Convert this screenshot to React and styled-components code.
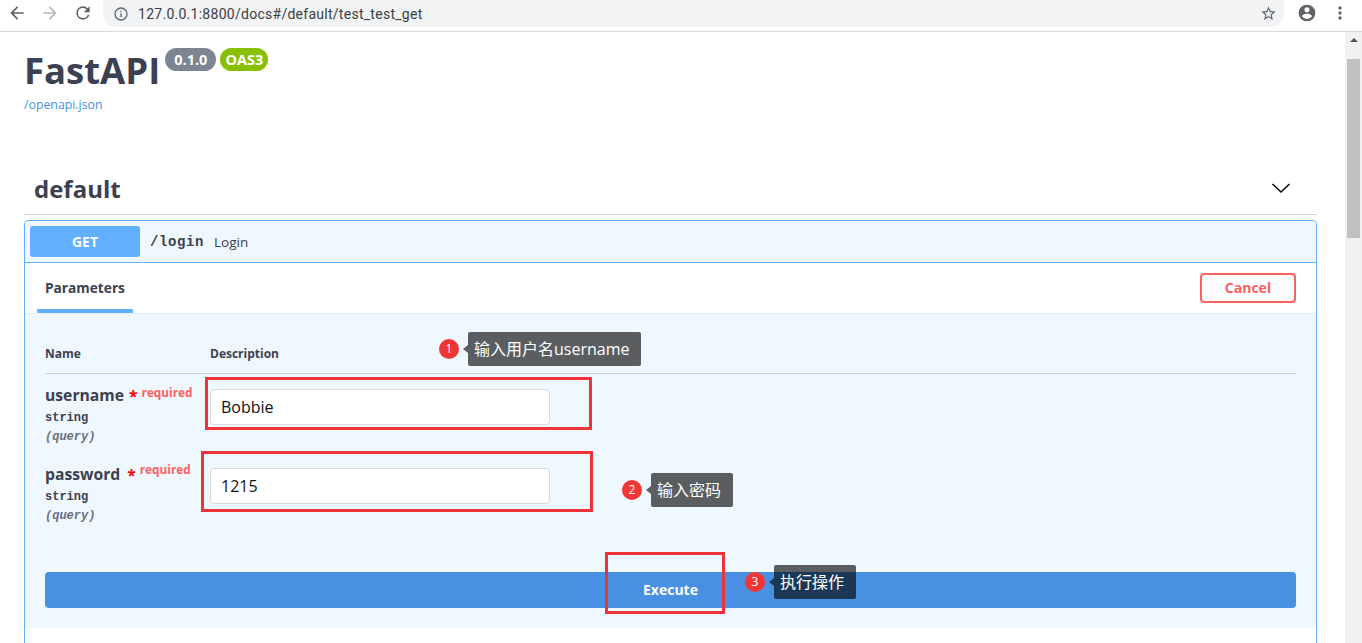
import React from 'react';
import styled, { createGlobalStyle } from 'styled-components';

const Global = createGlobalStyle`
  html, body { margin: 0; padding: 0; height: 643px; overflow: hidden; background: #fff; }
  * { box-sizing: border-box; }
  body { font-family: "Open Sans", "Noto Sans CJK SC", sans-serif; color: #3b4151; }
`;

const Shell = styled.div`display: flex; flex-direction: column; width: 1362px; height: 643px; overflow: hidden;`;

const Toolbar = styled.header`
  flex: none; height: 32px; display: flex; align-items: flex-start; background: #fff;
  border-bottom: 1px solid #d9dadc; padding-left: 7px;
`;
const NavIcon = styled.svg`flex: none; width: 20px; height: 20px; margin-top: 3px; margin-right: ${p => p.$mr || 13}px; fill: ${p => p.$c || '#5f6368'};`;
const Omnibox = styled.div`
  flex: none; width: 1181px; height: 27px; margin-left: 9px; margin-right: 13px; border-radius: 0 0 14px 14px / 0 0 13px 13px;
  background: #f1f3f4; display: flex; align-items: center; padding: 0 7px 0 10px;
`;
const UrlText = styled.span`
  flex: 1; font-family: Roboto, "Liberation Sans", sans-serif; font-size: 14px; color: #3c4043; margin-left: 9px; letter-spacing: .27px;
`;
const SmallIcon = styled.svg`flex: none; width: ${p => p.$s || 16}px; height: ${p => p.$s || 16}px; fill: #5f6368;`;

const Body = styled.div`flex: 1; display: flex; min-height: 0;`;
const Page = styled.main`flex: 1; position: relative; padding: 0 28px 0 24px; overflow: hidden;`;

const Scrollbar = styled.aside`flex: none; width: 17px; background: #f1f1f1; display: flex; flex-direction: column; align-items: center; padding-top: 6px;`;
const ScrollArrow = styled.div`width: 0; height: 0; border-left: 4px solid transparent; border-right: 4px solid transparent; border-bottom: 4px solid #505050;`;
const ScrollThumb = styled.div`width: 13px; height: 179px; margin-top: 17px; background: #c1c1c1;`;

const Info = styled.section`height: 138px; padding-top: 18px;`;
const TitleRow = styled.div`display: flex; align-items: flex-start; height: 43px;`;
const Title = styled.h1`margin: 0; font-size: 36.5px; line-height: 41px; font-weight: 700; color: #3b4151;`;
const Badge = styled.span`
  height: 23px; margin: -2px 0 0 ${p => p.$ml}px; padding: 0 ${p => p.$px}px; border-radius: 12px; background: ${p => p.$bg};
  color: #fff; font-size: 14.5px; line-height: 23px; font-weight: 700;
`;
const SpecLink = styled.a`display: block; margin-top: 4px; font-size: 12.3px; line-height: 16px; color: #4990e2;`;

const TagHead = styled.div`
  height: 45px; padding: 0 26px 6px 10px; display: flex; align-items: center; justify-content: space-between;
  border-bottom: 1px solid #d0d2d6;
`;
const TagName = styled.h3`margin: 0; font-size: 24px; font-weight: 700; color: #3b4151; line-height: 34px;`;
const Chevron = styled.svg`width: 20px; height: 20px; margin-top: -2px; fill: none; stroke: #000; stroke-width: 1.5;`;

const Opblock = styled.article`margin-top: 5px; border: 1px solid #61affe; border-radius: 4px; background: #fff; height: 440px; overflow: hidden;`;
const Summary = styled.div`height: 42px; display: flex; align-items: center; padding-left: 5px; border-bottom: 1px solid #61affe; background: #eff7ff;`;
const Method = styled.span`
  width: 110px; height: 31px; border-radius: 3px; background: #61affe; color: #fff; font-size: 14px; font-weight: 700;
  display: flex; align-items: center; justify-content: center;
`;
const PathText = styled.span`margin-left: 10px; font-family: "Liberation Mono", monospace; font-size: 14px; font-weight: 700; color: #3b4151; letter-spacing: .6px;`;
const SummaryText = styled.span`margin-left: 10px; font-size: 13.5px; color: #3b4151;`;

const TabBar = styled.div`
  height: 51px; background: #fff; padding: 0 20px 0 12px; display: flex; justify-content: space-between; align-items: flex-start;
  border-bottom: 1px solid #e5eef7;
`;
const Tab = styled.div`
  width: 96px; height: 50px; padding: 15px 0 0 8px; font-size: 13.7px; line-height: 19px; font-weight: 700; color: #3b4151;
  border-bottom: 4px solid #61affe;
`;
const CancelButton = styled.button`
  width: 96px; height: 30px; margin-top: 10px; background: #fff; border: 2px solid #ff6060; border-radius: 4px;
  color: #ff6060; font: 700 14px "Open Sans", sans-serif; padding: 0 0 2px;
`;

const Params = styled.div`padding: 28px 20px 0; background: #eff7ff;`;
const ColHead = styled.div`
  display: grid; grid-template-columns: 165px 1fr; height: 32px; border-bottom: 1px solid #ccd0d5;
  font-size: 12px; font-weight: 700; line-height: 24px; color: #3b4151;
`;
const Row = styled.div`display: grid; grid-template-columns: 165px 1fr; height: 79px; padding-top: 9px;`;
const NameLine = styled.div`display: flex; align-items: flex-start; height: 26px; font-size: 15.7px; line-height: 24px; font-weight: 700; color: #3b4151;`;
const Star = styled.span`color: #f00; margin-left: ${p => p.$ml}px; line-height: 26px;`;
const Required = styled.span`margin: ${p => p.$mt}px 0 0 4px; font-size: 11.8px; line-height: 20px; color: #ff6060;`;
const TypeText = styled.div`font-family: "Liberation Mono", monospace; font-size: 12px; font-weight: 700; line-height: 19px; color: #3b4151;`;
const QueryText = styled(TypeText)`font-style: italic; color: #6b7080;`;
const InputBox = styled.input`
  display: block; width: 340px; height: 36px; margin-top: 6px; padding: 0 10px; border: 1px solid #d9d9d9; border-radius: 4px; background: #fff;
  font: 400 16px "Open Sans", sans-serif; color: #111; outline: none;
`;
const Execute = styled.button`
  display: block; width: 100%; height: 36px; margin-top: 40px; border: 0; border-radius: 4px; background: #4990e2; color: #fff;
  font: 700 14px "Open Sans", sans-serif; padding: 0 0 2px;
`;
const Tail = styled.div`height: 20px;`;

const Mark = styled.div`position: absolute; border: 3px solid #ee3338; pointer-events: none;`;
const Dot = styled.span`
  position: absolute; width: 20px; height: 20px; border-radius: 50%; background: #f03535; color: #fff;
  font-size: 12px; line-height: 20px; text-align: center;
`;
const Tip = styled.div`
  position: absolute; height: 34px; padding: 0 12px 0 6px; border-radius: 2px; background: rgba(0,0,0,.62); color: #fff;
  font-family: "Open Sans", "Noto Sans CJK SC", sans-serif; font-size: 16px; line-height: 34px; white-space: nowrap;
  &::before { content: ""; position: absolute; left: -5px; top: 13px; border-top: 4px solid transparent; border-bottom: 4px solid transparent; border-right: 5px solid rgba(0,0,0,.62); }
`;

const BackPath = 'M20 11H7.83l5.59-5.59L12 4l-8 8 8 8 1.41-1.41L7.83 13H20v-2z';
const ForwardPath = 'M12 4l-1.41 1.41L16.17 11H4v2h12.17l-5.58 5.59L12 20l8-8z';
const ReloadPath = 'M17.65 6.35A7.95 7.95 0 0 0 12 4a8 8 0 1 0 7.73 10h-2.08A6 6 0 1 1 12 6c1.66 0 3.14.69 4.22 1.78L13 11h7V4l-2.35 2.35z';

const Annotation = ({ n, dotX, dotY, tipX, tipY, width, children }) => (
  <>
    <Dot style={{ left: dotX, top: dotY }}>{n}</Dot>
    <Tip style={{ left: tipX, top: tipY, width }}>{children}</Tip>
  </>
);

const Param = ({ name, value, starMl, reqMt }) => (
  <Row>
    <div>
      <NameLine>{name}<Star $ml={starMl}>*</Star><Required $mt={reqMt}>required</Required></NameLine>
      <TypeText>string</TypeText>
      <QueryText>(query)</QueryText>
    </div>
    <div><InputBox readOnly value={value} /></div>
  </Row>
);

export default function App() {
  return (
    <Shell>
      <Global />
      <Toolbar>
        <NavIcon viewBox="0 0 24 24"><path d={BackPath} /></NavIcon>
        <NavIcon viewBox="0 0 24 24" $c="#b4b7bb"><path d={ForwardPath} /></NavIcon>
        <NavIcon viewBox="0 0 24 24" $mr={1}><path d={ReloadPath} /></NavIcon>
        <Omnibox>
          <SmallIcon viewBox="0 0 24 24"><path d="M11 7h2v2h-2zm0 4h2v6h-2zm1-9a10 10 0 1 0 0 20 10 10 0 0 0 0-20zm0 18a8 8 0 1 1 0-16 8 8 0 0 1 0 16z" /></SmallIcon>
          <UrlText>127.0.0.1:8800/docs#/default/test_test_get</UrlText>
          <SmallIcon viewBox="0 0 24 24" $s={17}><path d="M22 9.24l-7.19-.62L12 2 9.19 8.63 2 9.24l5.46 4.73L5.82 21 12 17.27 18.18 21l-1.63-7.03L22 9.24zM12 15.4l-3.76 2.27 1-4.28-3.32-2.88 4.38-.38L12 6.1l1.71 4.04 4.38.38-3.32 2.88 1 4.28L12 15.4z" /></SmallIcon>
        </Omnibox>
        <NavIcon viewBox="0 0 24 24" $mr={13}><path d="M12 2a10 10 0 1 0 0 20 10 10 0 0 0 0-20zm0 3a3 3 0 1 1 0 6.01A3 3 0 0 1 12 5zm0 14.2a7.2 7.2 0 0 1-6-3.22c.03-1.99 4-3.08 6-3.08s5.97 1.09 6 3.08a7.2 7.2 0 0 1-6 3.22z" /></NavIcon>
        <NavIcon viewBox="0 0 24 24" $mr={0}><path d="M12 8a2 2 0 1 0 0-4 2 2 0 0 0 0 4zm0 2a2 2 0 1 0 0 4 2 2 0 0 0 0-4zm0 6a2 2 0 1 0 0 4 2 2 0 0 0 0-4z" /></NavIcon>
      </Toolbar>
      <Body>
        <Page>
          <Info>
            <TitleRow>
              <Title>FastAPI</Title>
              <Badge $bg="#7d8492" $ml={5} $px={9}>0.1.0</Badge>
              <Badge $bg="#89bf04" $ml={4} $px={5}>OAS3</Badge>
            </TitleRow>
            <SpecLink>/openapi.json</SpecLink>
          </Info>
          <TagHead>
            <TagName>default</TagName>
            <Chevron viewBox="0 0 20 20"><path d="M1.5 6 L10 14 L18.5 6" /></Chevron>
          </TagHead>
          <Opblock>
            <Summary>
              <Method>GET</Method>
              <PathText>/login</PathText>
              <SummaryText>Login</SummaryText>
            </Summary>
            <TabBar>
              <Tab>Parameters</Tab>
              <CancelButton>Cancel</CancelButton>
            </TabBar>
            <Params>
              <ColHead><span>Name</span><span>Description</span></ColHead>
              <Param name="username" value="Bobbie" starMl={5} reqMt={-1} />
              <Param name="password" value="1215" starMl={7} reqMt={-3} />
              <Execute>Execute</Execute>
              <Tail />
            </Params>
          </Opblock>
          <Mark style={{ left: 205, top: 345, width: 387, height: 53 }} />
          <Mark style={{ left: 201, top: 419, width: 392, height: 61 }} />
          <Mark style={{ left: 605, top: 520, width: 120, height: 62 }} />
          <Annotation n={1} dotX={439} dotY={307} tipX={468} tipY={300} width={173}>输入用户名username</Annotation>
          <Annotation n={2} dotX={622} dotY={448} tipX={651} tipY={441} width={82}>输入密码</Annotation>
          <Annotation n={3} dotX={745} dotY={540} tipX={774} tipY={533} width={82}>执行操作</Annotation>
        </Page>
        <Scrollbar>
          <ScrollArrow />
          <ScrollThumb />
        </Scrollbar>
      </Body>
    </Shell>
  );
}
